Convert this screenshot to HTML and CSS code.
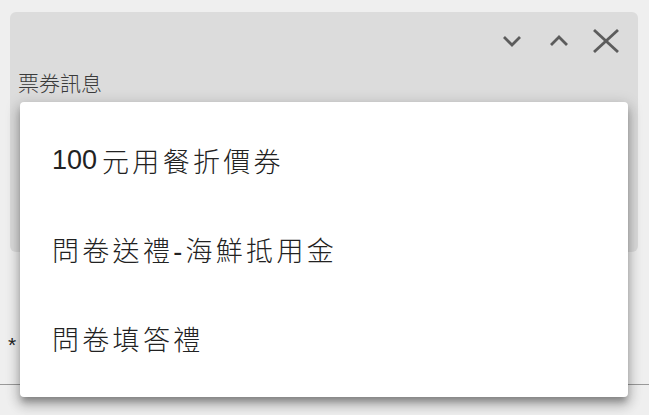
FILE: index.html
```html
<!DOCTYPE html>
<html lang="zh-Hant">
<head>
  <meta charset="UTF-8" />
  <title>票券訊息</title>
  <meta name="viewport" content="width=device-width, initial-scale=1.0" />
  <link rel="stylesheet" href="styles.css">
</head>

<body>

  <!-- 票券面板 -->
  <div class="panel">
    <div class="toolbar">
      <svg class="icon icon-down" width="20" height="12" viewBox="0 0 20 12">
        <polyline points="2,2 10,10 18,2" />
      </svg>
      <svg class="icon icon-up" width="20" height="12" viewBox="0 0 20 12">
        <polyline points="2,10 10,2 18,10" />
      </svg>
      <svg class="icon icon-close" width="28" height="24" viewBox="0 0 28 24">
        <line x1="2" y1="1" x2="26" y2="23" />
        <line x1="26" y1="1" x2="2" y2="23" />
      </svg>
    </div>
    <div class="label">票券訊息</div>
  </div>

  <!-- 下方欄位 -->
  <div class="field">
    <span class="required">*</span>
  </div>

  <!-- 下拉選單 -->
  <ul class="menu">
    <li class="menu-item"><span class="num">100</span>元用餐折價券</li>
    <li class="menu-item">問卷送禮-海鮮抵用金</li>
    <li class="menu-item">問卷填答禮</li>
  </ul>

</body>
</html>
```

FILE: styles.css
```css
* { margin: 0; padding: 0; box-sizing: border-box; }

body {
  width: 649px;
  height: 415px;
  overflow: hidden;
  background-color: #efefef;
  font-family: 'Liberation Sans', 'Noto Sans CJK TC', sans-serif;
  font-weight: 300;
  color: #222;
}

/* 灰色面板 */
.panel {
  margin: 12px 11px 0 10px;
  height: 240px;
  background-color: #dcdcdc;
  border-radius: 6px;
}

.toolbar {
  display: flex;
  justify-content: flex-end;
  align-items: center;
  height: 58px;
  padding-right: 18px;
}

.icon {
  fill: none;
  stroke: #5c5c5c;
  stroke-width: 2.8;
}
.icon-up { margin-left: 27px; }
.icon-close { margin-left: 23px; }

.label {
  padding-left: 8px;
  font-size: 21px;
  line-height: 28px;
  color: #3a3a3a;
}

/* 底下欄位 */
.field {
  height: 133px;
  padding-top: 81px;
  border-bottom: 1px solid #999;
}
.required {
  display: block;
  padding-left: 8px;
  font-size: 21px;
  color: #222;
}

/* 下拉選單 (蓋在面板上) */
.menu {
  position: absolute;
  left: 20px;
  top: 102px;
  width: 608px;
  height: 295px;
  list-style: none;
  padding: 14px 0;
  background: #ffffff;
  border-radius: 4px;
  box-shadow: 0 6px 6px -2px rgba(0,0,0,0.28),
              0 8px 12px 2px rgba(0,0,0,0.16),
              0 3px 14px 3px rgba(0,0,0,0.12);
}
.menu-item {
  height: 89px;
  display: flex;
  align-items: center;
  padding-left: 32px;
  font-size: 27px;
  letter-spacing: 3.3px;
  color: #222;
}
.num {
  letter-spacing: 0;
  margin-right: 5px;
}
```
